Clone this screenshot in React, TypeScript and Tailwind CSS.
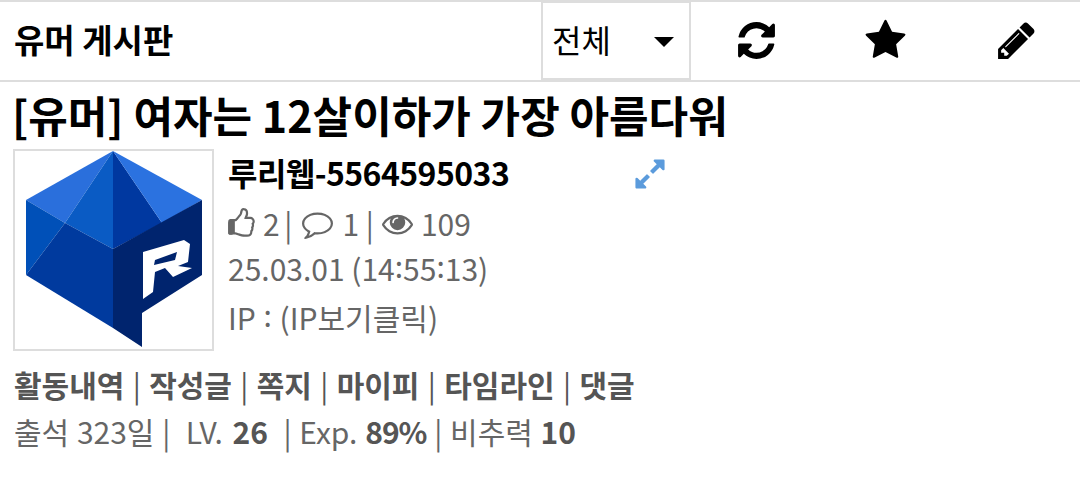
const ICONS = {
  refresh:
    'M1639 1056q0 5-1 7-64 268-268 434.5t-478 166.5q-146 0-282.5-55t-243.5-157l-129 129q-19 19-45 19t-45-19-19-45v-448q0-26 19-45t45-19h448q26 0 45 19t19 45-19 45l-137 137q71 66 161 102t187 36q134 0 250-65t186-179q11-17 53-117 8-23 30-23h192q13 0 22.5 9.5t9.5 22.5zm25-800v448q0 26-19 45t-45 19h-448q-26 0-45-19t-19-45 19-45l138-138q-148-137-349-137-134 0-250 65t-186 179q-11 17-53 117-8 23-30 23h-199q-13 0-22.5-9.5t-9.5-22.5v-7q65-268 270-434.5t480-166.5q146 0 284 55.5t245 156.5l130-129q19-19 45-19t45 19 19 45z',
  star: 'M1728 647q0 22-26 48l-363 354 86 500q1 7 1 20 0 21-10.5 35.5t-30.5 14.5q-19 0-40-12l-449-236-449 236q-22 12-40 12-21 0-31.5-14.5t-10.5-35.5q0-6 2-20l86-500-364-354q-25-27-25-48 0-37 56-46l502-73 225-455q19-41 49-41t49 41l225 455 502 73q56 9 56 46z',
  pencil:
    'M491 1536l91-91-235-235-91 91v107h128v128h107zm523-928q0-22-22-22-10 0-17 7l-542 542q-7 7-7 17 0 22 22 22 10 0 17-7l542-542q7-7 7-17zm-54-192l416 416-832 832h-416v-416zm683 96q0 53-37 90l-166 166-416-416 166-165q36-38 90-38 53 0 91 38l235 234q37 39 37 91z',
  thumb:
    'M384 1344q0-26-19-45t-45-19-45 19-19 45 19 45 45 19 45-19 19-45zm1152-576q0-51-39-89.5t-89-38.5h-352q0-58 48-159.5t48-160.5q0-98-32-145t-128-47q-26 26-38 85t-30.5 125.5-59.5 109.5q-22 23-77 91-4 5-23 30t-31.5 41-34.5 42.5-40 44-38.5 35.5-40 27-35.5 9h-32v640h32q13 0 31.5 3t33 6.5 38 11 35 11.5 35.5 12.5 29 10.5q211 73 342 73h121q192 0 192-167 0-26-5-56 30-16 47.5-52.5t17.5-73.5-18-69q53-50 53-119 0-25-10-55.5t-25-47.5q32-1 53.5-47t21.5-81zm128-1q0 89-49 163 9 33 9 69 0 77-38 144 3 21 3 43 0 101-60 178 1 139-85 219.5t-227 80.5h-129q-96 0-189.5-22.5t-216.5-65.5q-116-40-138-40h-288q-53 0-90.5-37.5t-37.5-90.5v-640q0-53 37.5-90.5t90.5-37.5h274q36-24 137-155 58-75 107-128 24-25 35.5-85.5t30.5-126.5 62-108q39-37 90-37 84 0 151 32.5t102 101.5 35 186q0 93-48 192h176q104 0 180 76t76 179z',
  comment:
    'M896 384q-204 0-381.5 69.5t-282 187.5-104.5 255q0 112 71.5 213.5t201.5 175.5l87 50-27 96q-24 91-70 172 152-63 275-171l43-38 57 6q69 8 130 8 204 0 381.5-69.5t282-187.5 104.5-255-104.5-255-282-187.5-381.5-69.5zm896 512q0 174-120 321.5t-326 233-450 85.5q-70 0-145-8-198 175-460 242-49 14-114 22h-5q-15 0-27-10.5t-16-27.5v-1q-3-4-.5-12t2-10 4.5-9.5l6-9 7-8.5 8-9q7-8 31-34.5t34.5-38 31-39.5 32.5-51 27-59 26-76q-157-89-247.5-220t-90.5-281q0-174 120-321.5t326-233 450-85.5 450 85.5 326 233 120 321.5z',
  eye: 'M1664 960q-152-236-381-353 61 104 61 225 0 185-131.5 316.5t-316.5 131.5-316.5-131.5-131.5-316.5q0-121 61-225-229 117-381 353 133 205 333.5 326.5t434.5 121.5 434.5-121.5 333.5-326.5zm-720-384q0-20-14-34t-34-14q-125 0-214.5 89.5t-89.5 214.5q0 20 14 34t34 14 34-14 14-34q0-86 61-147t147-61q20 0 34-14t14-34zm848 384q0 34-20 69-140 230-376.5 368.5t-499.5 138.5-499.5-139-376.5-368q-20-35-20-69t20-69q140-229 376.5-368t499.5-139 499.5 139 376.5 368q20 35 20 69z',
  expand:
    'M883 1056q0 13-10 23l-332 332 144 144q19 19 19 45t-19 45-45 19h-448q-26 0-45-19t-19-45v-448q0-26 19-45t45-19 45 19l144 144 332-332q10-10 23-10t23 10l114 114q10 10 10 23zm781-864v448q0 26-19 45t-45 19-45-19l-144-144-332 332q-10 10-23 10t-23-10l-114-114q-10-10-10-23t10-23l332-332-144-144q-19-19-19-45t19-45 45-19h448q26 0 45 19t19 45z',
}

function Icon({ name, className }: { name: keyof typeof ICONS; className: string }) {
  return (
    <svg viewBox="0 0 1792 1792" fill="currentColor" className={className}>
      <path d={ICONS[name]} />
      {/* cuff of the thumb reads as solid in the reference */}
      {name === 'thumb' && <rect x="128" y="790" width="290" height="750" rx="80" />}
    </svg>
  )
}

function Logo() {
  return (
    <svg width="197" height="198" viewBox="15 151 197 198">
      <polygon points="113,151 26,200 65,223" fill="#2a6fdc" />
      <polygon points="113,151 65,223 113,249" fill="#0a5bc4" />
      <polygon points="113,151 113,249 162,223" fill="#0038a0" />
      <polygon points="113,151 162,223 202,200" fill="#2b72e0" />
      <polygon points="26,200 65,223 26,275" fill="#0050b8" />
      <polygon points="65,223 113,249 113,328 26,275" fill="#003a9e" />
      <polygon points="113,249 202,200 202,275 142,313 142,347 113,328" fill="#00246e" />
      <path
        fillRule="evenodd"
        d="M143 252 L184 240 L190 244 L188 262 L178 266 L192 268 L173 277 L165 268 L155 272 L153 292 L143 299 Z M155 260 L177 252 L175 260 L154 265 Z"
        fill="#fff"
      />
    </svg>
  )
}

// the reference's colons sit higher than the font's own
function Colon() {
  return <span className="align-[3px] leading-[0]">:</span>
}

export default function App() {
  return (
    <div className="bg-white text-[#666] font-['Noto_Sans_CJK_KR','Noto_Sans',sans-serif]">
      <header className="flex h-[82px] items-stretch border-y-2 border-[#ddd] pl-[14px] text-black">
        <h1 className="flex-1 self-center text-[33px] leading-none font-bold -mt-[4px]">유머 게시판</h1>
        <div className="-mt-px flex w-[150px] items-center justify-between border-2 border-[#ddd] pr-[15px] pl-[9px] text-[32px]">
          <span className="-mt-[3px]">전체</span>
          <span className="mt-[3px] h-0 w-0 border-x-[10px] border-t-[10px] border-x-transparent border-t-black" />
        </div>
        <div className="flex w-[130px] items-center justify-center -mt-px">
          <Icon name="refresh" className="h-[43px] w-[43px]" />
        </div>
        <div className="flex w-[129px] items-center justify-center -mt-px">
          <Icon name="star" className="h-[43px] w-[43px]" />
        </div>
        <div className="flex w-[130px] items-center justify-center pl-[2px] -mt-px">
          <Icon name="pencil" className="h-[43px] w-[43px]" />
        </div>
      </header>

      <div className="px-[14px]">
        <h2 className="-ml-[2px] mt-[5px] text-[43px] leading-[54px] font-bold text-black">
          [유머] 여자는 12살이하가 가장 아름다워
        </h2>
        <div className="mt-[8px] -ml-px flex gap-[14px]">
          <div className="h-[202px] w-[201px] shrink-0 border-2 border-[#ddd]">
            <Logo />
          </div>
          <div className="relative w-[440px] text-[30px] leading-[47px]">
            <div className="text-[32px] font-bold tracking-[-0.55px] text-black">루리웹-5564595033</div>
            <Icon name="expand" className="absolute top-[8px] left-[405px] h-[34px] w-[34px] text-[#5b9bdc]" />
            <div className="mt-[4px] flex items-center">
              <Icon name="thumb" className="-ml-[2px] h-[31px] w-[31px]" />
              <span className="ml-[6px] [word-spacing:-2px]">2 |</span>
              <Icon name="comment" className="ml-[10px] h-[31px] w-[31px]" />
              <span className="ml-[9px]">1 |</span>
              <Icon name="eye" className="ml-[8px] h-[31px] w-[31px]" />
              <span className="ml-[8px]">109</span>
            </div>
            <div className="-mt-[2px]">
              25.03.01 (14
              <Colon />
              55
              <Colon />
              13)
            </div>
            <div className="mt-[2px] [word-spacing:1px]">
              IP <Colon /> (IP보기클릭)
            </div>
          </div>
        </div>
        <div className="mt-[10px] text-[30px] leading-[47px]">
          <div className="text-[#555] [word-spacing:1.6px]">
            <b>활동내역</b> | <b>작성글</b> | <b>쪽지</b> | <b>마이피</b> | <b>타임라인</b> | <b>댓글</b>
          </div>
          <div className="[word-spacing:1px]">
            출석 323일 |&nbsp; LV. <b className="ml-[2px] text-[#555]">26</b> &nbsp;| Exp.{' '}
            <b className="tracking-[-1px] text-[#555]">89%</b> | 비추력 <b className="text-[#555]">10</b>
          </div>
        </div>
      </div>
    </div>
  )
}
